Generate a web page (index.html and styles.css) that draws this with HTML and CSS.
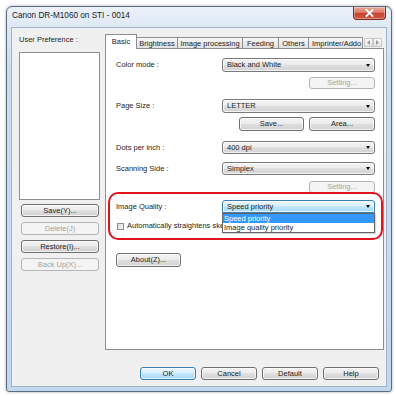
FILE: index.html
```html
<!DOCTYPE html>
<html>
<head>
<meta charset="utf-8">
<link rel="stylesheet" href="styles.css">
</head>
<body>
<div class="window">
  <div class="titlebar">
    <span class="title">Canon DR-M1060 on STI - 0014</span>
    <div class="close">
      <svg width="9" height="8" viewBox="0 0 9 8"><path d="M1.5 1 L7.5 7 M7.5 1 L1.5 7" stroke="#fff" stroke-width="1.8" stroke-linecap="square"/></svg>
    </div>
  </div>
  <div class="client">
    <div class="main">
      <div class="leftpane">
        <div class="lbl">User Preference :</div>
        <div class="listbox"></div>
        <div class="lbtns">
          <div class="btn">Save(Y)...</div>
          <div class="btn dis">Delete(J)</div>
          <div class="btn">Restore(I)...</div>
          <div class="btn dis">Back Up(X)...</div>
        </div>
      </div>
      <div class="tabctl">
        <div class="tabs">
          <div class="tab sel t-basic">Basic</div>
          <div class="tab t-bright">Brightness</div>
          <div class="tab t-img">Image processing</div>
          <div class="tab t-feed">Feeding</div>
          <div class="tab t-oth">Others</div>
          <div class="tab t-imp">Imprinter/Addo</div>
          <div class="updown">
            <div class="ud"><svg width="3" height="5" viewBox="0 0 3 5"><path d="M3 0 L0 2.5 L3 5Z" fill="#9a9a9a"/></svg></div>
            <div class="ud"><svg width="3" height="5" viewBox="0 0 3 5"><path d="M0 0 L3 2.5 L0 5Z" fill="#9a9a9a"/></svg></div>
          </div>
        </div>
        <div class="panel">
          <div class="row r1">
            <span class="plbl">Color mode :</span>
            <div class="combo h14"><span>Black and White</span><i class="arr"></i></div>
          </div>
          <div class="row r2">
            <span></span>
            <div class="btn dis w66 h12 jend">Setting...</div>
          </div>
          <div class="row r3">
            <span class="plbl">Page Size :</span>
            <div class="combo h14"><span>LETTER</span><i class="arr"></i></div>
          </div>
          <div class="row r4">
            <span></span>
            <div class="pair">
              <div class="btn w65 h14">Save...</div>
              <div class="btn w66 h14">Area...</div>
            </div>
          </div>
          <div class="row r5">
            <span class="plbl">Dots per inch :</span>
            <div class="combo h13"><span>400 dpi</span><i class="arr"></i></div>
          </div>
          <div class="row r6">
            <span class="plbl">Scanning Side :</span>
            <div class="combo h13"><span>Simplex</span><i class="arr"></i></div>
          </div>
          <div class="row r7">
            <span></span>
            <div class="btn dis w66 h12 jend">Setting...</div>
          </div>
          <div class="row r8">
            <span class="plbl">Image Quality :</span>
            <div class="combo focus h13"><span>Speed priority</span><i class="arr"></i>
              <div class="droplist">
                <div class="item hi">Speed priority</div>
                <div class="item">Image quality priority</div>
              </div>
            </div>
          </div>
          <div class="row r9">
            <div class="chk"><span class="box"></span><span class="chktxt">Automatically straightens ske</span></div>
          </div>
          <div class="row r10">
            <div class="btn w65 h14">About(Z)...</div>
          </div>
          <div class="redmark"></div>
        </div>
      </div>
    </div>
    <div class="footer">
      <div class="btn def fbtn">OK</div>
      <div class="btn fbtn">Cancel</div>
      <div class="btn fbtn">Default</div>
      <div class="btn fbtn">Help</div>
    </div>
  </div>
</div>
</body>
</html>
```

FILE: styles.css
```css
html, body {
  margin: 0;
  padding: 0;
  background: #ffffff;
}
body {
  font-family: "Liberation Sans", Arial, sans-serif;
  font-size: 7.5px;
  color: #1e1e1e;
  width: 396px;
  height: 396px;
  overflow: hidden;
}
.window {
  margin: 6px 0 0 6px;
  width: 386px;
  height: 386px;
  box-sizing: border-box;
  border: 1px solid #5b6b82;
  border-radius: 6px 6px 3px 3px;
  background: linear-gradient(180deg, #eaf1f9 0px, #dde8f4 22px, #cbdcef 60px, #c3d7ee 100%);
  box-shadow: 0 0 3px rgba(0,0,0,0.35);
  padding: 0 5px 5px 5px;
  display: flex;
  flex-direction: column;
}
.titlebar {
  height: 21px;
  display: flex;
  align-items: flex-start;
  justify-content: space-between;
}
.title {
  font-size: 8.2px;
  line-height: 10px;
  margin-top: 4px;
  color: #1b1b1b;
}
.close {
  width: 33px;
  height: 13px;
  box-sizing: border-box;
  border: 1px solid #7b2b22;
  border-top: none;
  border-radius: 0 0 4px 4px;
  background: linear-gradient(180deg, #e9a99a 0%, #dc7c68 45%, #c8432f 52%, #d2563f 100%);
  box-shadow: inset 0 0 0 1px rgba(255,255,255,0.35);
  display: flex;
  align-items: center;
  justify-content: center;
}
.client {
  flex: 1;
  background: #f0f0f0;
  box-shadow: 0 0 0 1px #9fb3cb;
  display: flex;
  flex-direction: column;
}
.main {
  flex: 1;
  display: flex;
}
.leftpane {
  width: 93px;
  box-sizing: border-box;
  padding: 7px 0 0 7px;
  display: flex;
  flex-direction: column;
}
.lbl {
  line-height: 10px;
  height: 10px;
}
.listbox {
  margin-top: 7px;
  width: 81px;
  height: 148px;
  box-sizing: border-box;
  border: 1px solid #8d9096;
  background: #fff;
}
.lbtns {
  margin-top: 4px;
  margin-left: 2px;
  width: 78px;
  display: flex;
  flex-direction: column;
  gap: 5px;
}
.lbtns .btn {
  height: 13px;
}
.btn {
  box-sizing: border-box;
  border: 1px solid #707070;
  border-radius: 3px;
  background: linear-gradient(180deg, #f3f3f3 0%, #ececec 45%, #dedede 52%, #d2d2d2 100%);
  box-shadow: inset 0 0 0 1px rgba(255,255,255,0.7);
  display: flex;
  align-items: center;
  justify-content: center;
  line-height: 10px;
  color: #1e1e1e;
  white-space: nowrap;
}
.btn.dis {
  border-color: #b2b6b9;
  background: #f4f4f4;
  box-shadow: none;
  color: #a3a3a3;
}
.btn.def {
  border-color: #3c7fb1;
  background: linear-gradient(180deg, #eaf6fd 0%, #d9f0fc 45%, #bee6fd 52%, #a9daf6 100%);
  box-shadow: inset 0 0 0 1px rgba(255,255,255,0.6);
}
.tabctl {
  width: 279px;
  margin-top: 6px;
  display: flex;
  flex-direction: column;
}
.tabs {
  height: 14px;
  display: flex;
  align-items: flex-end;
}
.tab {
  position: relative;
  height: 11px;
  box-sizing: border-box;
  border: 1px solid #8c8e94;
  border-bottom: none;
  margin-left: -1px;
  background: linear-gradient(180deg, #f7f7f7 0%, #ebebeb 50%, #e1e1e1 100%);
  display: flex;
  align-items: center;
  justify-content: center;
  line-height: 9px;
  white-space: nowrap;
  overflow: hidden;
}
.tab.sel {
  height: 15px;
  margin-left: 0;
  margin-bottom: -1px;
  background: #fff;
  z-index: 2;
  padding-bottom: 2px;
}
.t-basic { width: 32px; }
.t-bright { width: 42px; }
.t-img { width: 66px; }
.t-feed { width: 37px; }
.t-oth { width: 31px; }
.t-imp { width: 55px; justify-content: flex-start; padding-left: 3px; }
.updown {
  display: flex;
  align-self: flex-start;
  margin-top: 4px;
  margin-left: 1px;
}
.ud {
  width: 9px;
  height: 9px;
  box-sizing: border-box;
  border: 1px solid #c8c8c8;
  background: linear-gradient(180deg, #fafafa, #e6e6e6);
  display: flex;
  align-items: center;
  justify-content: center;
}
.panel {
  flex: 1;
  position: relative;
  box-sizing: border-box;
  border: 1px solid #8c8e94;
  background: #fff;
  padding: 9px 8px 0 10px;
  display: flex;
  flex-direction: column;
}
.row {
  display: grid;
  grid-template-columns: 106px 153px;
  align-items: center;
}
.plbl {
  line-height: 10px;
}
.r2 { margin-top: 5px; }
.r3 { margin-top: 10px; }
.r4 { margin-top: 4px; }
.r5 { margin-top: 10px; }
.r6 { margin-top: 8px; }
.r7 { margin-top: 6px; }
.r8 { margin-top: 7px; }
.r9 { margin-top: 9px; display: block; }
.r10 { margin-top: 23px; display: block; }
.h12 { height: 12px; }
.h13 { height: 13px; }
.h14 { height: 14px; }
.w65 { width: 65px; }
.w66 { width: 66px; }
.jend { justify-self: end; }
.pair {
  display: flex;
  justify-content: flex-end;
  gap: 5px;
}
.combo {
  position: relative;
  box-sizing: border-box;
  border: 1px solid #7a7a7a;
  border-radius: 3px;
  background: linear-gradient(180deg, #f3f3f3 0%, #ececec 45%, #dedede 52%, #d3d3d3 100%);
  box-shadow: inset 0 0 0 1px rgba(255,255,255,0.7);
  display: flex;
  align-items: center;
  justify-content: space-between;
  padding: 0 4px 0 4px;
  line-height: 10px;
}
.combo.focus {
  border-color: #3c7fb1;
  border-radius: 3px 3px 0 0;
  background: linear-gradient(180deg, #eaf6fd 0%, #d9f0fc 45%, #bee6fd 52%, #a9daf6 100%);
}
.arr {
  width: 0;
  height: 0;
  border-left: 2.5px solid transparent;
  border-right: 2.5px solid transparent;
  border-top: 3px solid #000;
}
.droplist {
  position: absolute;
  left: -1px;
  right: -1px;
  top: 12px;
  height: 20px;
  box-sizing: border-box;
  border: 1px solid #646464;
  background: #fff;
  z-index: 3;
  box-shadow: 1px 1px 1px rgba(0,0,0,0.15);
}
.item {
  height: 9px;
  line-height: 9px;
  padding-left: 1px;
  white-space: nowrap;
}
.item.hi {
  background: #3399ff;
  color: #fff;
}
.chk {
  display: flex;
  align-items: center;
  gap: 3px;
  height: 8px;
  line-height: 8px;
  white-space: nowrap;
  padding-left: 1px;
}
.chktxt {
  width: 95px;
  overflow: hidden;
}
.box {
  width: 7px;
  height: 7px;
  box-sizing: border-box;
  border: 1px solid #8e8f8f;
  background: linear-gradient(135deg, #dcdcdc, #f8f8f8);
}
.redmark {
  position: absolute;
  left: 2px;
  top: 143px;
  width: 275px;
  height: 48px;
  box-sizing: border-box;
  border: 2px solid #e3141c;
  border-radius: 10px;
  z-index: 4;
  pointer-events: none;
}
.footer {
  display: flex;
  justify-content: flex-end;
  gap: 5px;
  padding: 17px 7px 6px 0;
}
.fbtn {
  width: 56px;
  height: 13px;
}
```
